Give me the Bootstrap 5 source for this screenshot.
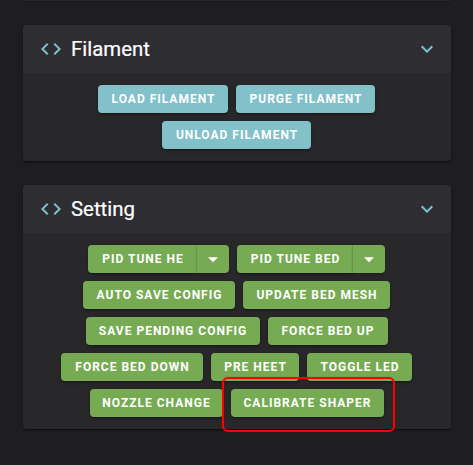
<!DOCTYPE html>
<html lang="en" data-bs-theme="dark">
<head>
<meta charset="utf-8">
<meta name="viewport" content="width=device-width, initial-scale=1">
<title>Macros</title>
<link href="https://cdn.jsdelivr.net/npm/bootstrap@5.3.0/dist/css/bootstrap.min.css" rel="stylesheet">
<style>
body{background:#1e1e20;font-family:Roboto,"Liberation Sans",sans-serif;height:465px;overflow:hidden}
.dash{padding:0 22px 0 23px;gap:24px}
.panel{--bs-card-bg:#28282a;--bs-card-border-width:0;--bs-card-border-radius:4px;box-shadow:0 2px 1px -1px rgba(0,0,0,.3),0 1px 1px rgba(0,0,0,.2),0 1px 4px rgba(0,0,0,.2)}
.panel-prev{height:1px;border-radius:0 0 4px 4px}
.panel .card-header{height:48px;background:#2e2d32;padding:0 12px 0 16px;border:0;border-radius:4px 4px 0 0;color:#fff}
.panel .card-body{padding:12px 12.5px 12px 12px;row-gap:8px;column-gap:8px}
.panel h2{font-size:20.4px;line-height:32px;font-weight:400;letter-spacing:0;-webkit-text-stroke:.2px #fff}
.ico{width:24px;height:24px;fill:#82c0ca}
.ico-code{margin-right:8px}
.macro{--bs-btn-padding-y:0;--bs-btn-padding-x:0;--bs-btn-font-size:12px;--bs-btn-font-weight:700;--bs-btn-border-width:0;--bs-btn-border-radius:4px;--bs-btn-color:#fff;height:28px;line-height:28px;letter-spacing:1px;text-indent:.5px;white-space:nowrap;box-shadow:0 3px 1px -2px rgba(0,0,0,.2),0 2px 2px rgba(0,0,0,.14),0 1px 5px rgba(0,0,0,.12)}
.macro-teal{--bs-btn-bg:#82c0ca}
.macro-green{--bs-btn-bg:#76ab54}
.w88{width:88px}.w105{width:105px}.w109{width:109px}.w116{width:116px}.w120{width:120px}.w130{width:130px}.w133{width:133px}.w139{width:139px}.w142{width:142px}.w147{width:147px}.w149{width:149px}.w152{width:152px}.w153{width:153px}.w174{width:174px}
.btn-group>.macro.drop{width:32px;box-shadow:-1px 0 2px rgba(0,0,0,.14),0 2px 2px rgba(0,0,0,.14)}
.drop svg{width:20px;height:20px;fill:#fff}
.ring{left:-9px;top:-12px;width:173px;height:55px;border:2px solid #f80202;border-radius:6px;box-shadow:0 0 1px rgba(240,0,0,.6);pointer-events:none;z-index:2}
</style>
</head>
<body>
<main class="dash d-flex flex-column">
  <div class="card panel panel-prev"></div>
  <section class="card panel">
    <div class="card-header d-flex align-items-center">
      <svg class="ico ico-code" viewBox="0 0 24 24"><path d="M14.6 16.6 19.2 12l-4.6-4.6L16 6l6 6-6 6-1.4-1.4M9.4 16.6 4.8 12l4.6-4.6L8 6l-6 6 6 6 1.4-1.4z"/></svg>
      <h2 class="mb-0 me-auto">Filament</h2>
      <svg class="ico" viewBox="0 0 24 24"><path d="M7.41 8.58 12 13.17l4.59-4.59L18 10l-6 6-6-6 1.41-1.42z"/></svg>
    </div>
    <div class="card-body d-flex flex-wrap justify-content-center">
      <button class="btn macro macro-teal w130">LOAD FILAMENT</button>
      <button class="btn macro macro-teal w139">PURGE FILAMENT</button>
      <button class="btn macro macro-teal w149">UNLOAD FILAMENT</button>
    </div>
  </section>
  <section class="card panel">
    <div class="card-header d-flex align-items-center">
      <svg class="ico ico-code" viewBox="0 0 24 24"><path d="M14.6 16.6 19.2 12l-4.6-4.6L16 6l6 6-6 6-1.4-1.4M9.4 16.6 4.8 12l4.6-4.6L8 6l-6 6 6 6 1.4-1.4z"/></svg>
      <h2 class="mb-0 me-auto">Setting</h2>
      <svg class="ico" viewBox="0 0 24 24"><path d="M7.41 8.58 12 13.17l4.59-4.59L18 10l-6 6-6-6 1.41-1.42z"/></svg>
    </div>
    <div class="card-body d-flex flex-wrap justify-content-center">
      <div class="btn-group">
        <button class="btn macro macro-green w109">PID TUNE HE</button>
        <button class="btn macro macro-green drop ms-0 d-flex align-items-center justify-content-center" aria-label="Parameters"><svg viewBox="0 0 24 24"><path d="m6 10 6 6 6-6z"/></svg></button>
      </div>
      <div class="btn-group">
        <button class="btn macro macro-green w116">PID TUNE BED</button>
        <button class="btn macro macro-green drop ms-0 d-flex align-items-center justify-content-center" aria-label="Parameters"><svg viewBox="0 0 24 24"><path d="m6 10 6 6 6-6z"/></svg></button>
      </div>
      <button class="btn macro macro-green w152">AUTO SAVE CONFIG</button>
      <button class="btn macro macro-green w147">UPDATE BED MESH</button>
      <button class="btn macro macro-green w174">SAVE PENDING CONFIG</button>
      <button class="btn macro macro-green w120">FORCE BED UP</button>
      <button class="btn macro macro-green w142">FORCE BED DOWN</button>
      <button class="btn macro macro-green w88">PRE HEET</button>
      <button class="btn macro macro-green w105">TOGGLE LED</button>
      <button class="btn macro macro-green w133">NOZZLE CHANGE</button>
      <div class="position-relative">
        <button class="btn macro macro-green w153">CALIBRATE SHAPER</button>
        <span class="ring position-absolute"></span>
      </div>
    </div>
  </section>
</main>
<script src="https://cdn.jsdelivr.net/npm/bootstrap@5.3.0/dist/js/bootstrap.bundle.min.js"></script>
</body>
</html>
